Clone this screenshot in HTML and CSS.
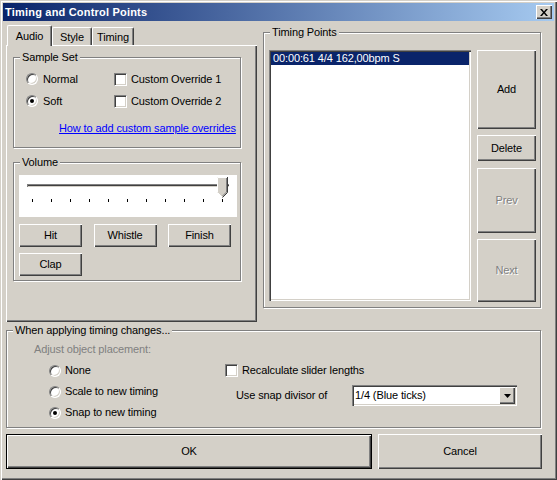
FILE: index.html
```html
<!DOCTYPE html>
<html>
<head>
<meta charset="utf-8">
<title>Timing and Control Points</title>
<link rel="stylesheet" href="styles.css">
</head>
<body>
<div class="window">
  <div class="titlebar">
    <span class="title">Timing and Control Points</span>
    <span class="close"><svg width="8" height="7" viewBox="0 0 8 7"><path d="M0 0H2L4 2.5L6 0H8L5 3.5L8 7H6L4 4.5L2 7H0L3 3.5Z" fill="#000"/></svg></span>
  </div>
  <div class="content">
    <div class="toprow">
      <div class="tabctl">
        <div class="tabstrip">
          <div class="tab active t-audio">Audio</div>
          <div class="tab t-style">Style</div>
          <div class="tab t-timing">Timing</div>
        </div>
        <div class="tabpanel">
          <div class="group sampleset">
            <span class="legend">Sample Set</span>
            <div class="optgrid">
              <div class="opt r"><span class="radio"></span>Normal</div>
              <div class="opt c"><span class="check"></span>Custom Override 1</div>
              <div class="opt r"><span class="radio on"></span>Soft</div>
              <div class="opt c"><span class="check"></span>Custom Override 2</div>
            </div>
            <a class="link">How to add custom sample overrides</a>
          </div>
          <div class="group volume">
            <span class="legend">Volume</span>
            <div class="slider">
              <svg width="218" height="42" viewBox="0 0 218 42">
                <rect x="8" y="9" width="202" height="1" fill="#808080"/>
                <rect x="8" y="10" width="202" height="1" fill="#404040"/>
                <rect x="9" y="11" width="201" height="1" fill="#d4d0c8"/>
                <rect x="8" y="12" width="202" height="1" fill="#ffffff"/>
                <rect x="8" y="9" width="1" height="3" fill="#808080"/>
                <path d="M13.5 24V27M32.5 24V27M51.5 24V27M70.5 24V27M89.5 24V27M108.5 24V27M127.5 24V27M146.5 24V27M165.5 24V27M184.5 24V27M203.5 24V27" stroke="#000" stroke-width="1"/>
                <polygon points="198,2 209,2 209,17 203.5,22.5 198,17" fill="#d4d0c8"/>
                <path d="M198.5 17V2.5H208" stroke="#fff" fill="none"/>
                <path d="M198.5 17.5L203 22" stroke="#fff" fill="none"/>
                <path d="M208.5 2V17.5L203.5 22.5" stroke="#404040" fill="none"/>
                <path d="M207.5 3V17L203.5 21" stroke="#808080" fill="none"/>
              </svg>
            </div>
            <div class="sndbtns">
              <div class="btn">Hit</div>
              <div class="btn">Whistle</div>
              <div class="btn">Finish</div>
              <div class="btn">Clap</div>
            </div>
          </div>
        </div>
      </div>
      <div class="group points">
        <span class="legend">Timing Points</span>
        <div class="listbox">
          <div class="item sel">00:00:61 4/4 162,00bpm S</div>
        </div>
        <div class="sidebtns">
          <div class="btn add">Add</div>
          <div class="btn del">Delete</div>
          <div class="btn prev disabled">Prev</div>
          <div class="btn next disabled">Next</div>
        </div>
      </div>
    </div>
    <div class="group apply">
      <span class="legend">When applying timing changes...</span>
      <div class="applyleft">
        <div class="row21 gray">Adjust object placement:</div>
        <div class="opt ar"><span class="radio"></span>None</div>
        <div class="opt ar"><span class="radio"></span>Scale to new timing</div>
        <div class="opt ar"><span class="radio on"></span>Snap to new timing</div>
      </div>
      <div class="applyright">
        <div class="opt recalc"><span class="check"></span>Recalculate slider lengths</div>
        <div class="snaprow">
          <span class="lbl">Use snap divisor of</span>
          <div class="combo">
            <span class="val">1/4 (Blue ticks)</span>
            <span class="drop"><svg width="7" height="4" viewBox="0 0 7 4"><polygon points="0,0 7,0 3.5,4" fill="#000"/></svg></span>
          </div>
        </div>
      </div>
    </div>
    <div class="dlgbtns">
      <div class="btn ok default">OK</div>
      <div class="btn cancel">Cancel</div>
    </div>
  </div>
</div>
</body>
</html>
```
FILE: styles.css
```css
* { box-sizing: border-box; }
html, body { margin: 0; padding: 0; }
body {
  background: #d4d0c8;
  font-family: "Liberation Sans", Arial, sans-serif;
  font-size: 11px;
  line-height: 13px;
  letter-spacing: -0.12px;
  color: #000;
}
.window {
  width: 557px;
  height: 480px;
  padding: 3px;
  background: #d4d0c8;
  box-shadow: inset 1px 1px #d4d0c8, inset 2px 2px #ffffff, inset -1px -1px #404040, inset -2px -2px #808080;
}
.titlebar {
  height: 18px;
  display: flex;
  align-items: center;
  justify-content: space-between;
  padding: 0 2px;
  background: linear-gradient(to right, #0a246a, #a6caf0);
  color: #fff;
  font-weight: bold;
}
.title { letter-spacing: 0.2px; }
.close {
  width: 16px;
  height: 14px;
  display: flex;
  align-items: center;
  justify-content: center;
  padding-top: 1px;
  background: #d4d0c8;
  box-shadow: inset 1px 1px #fff, inset -1px -1px #404040, inset -2px -2px #808080;
}
.close svg { display: block; }
.content { padding: 4px 0 0 3px; }
.toprow { display: flex; gap: 6px; height: 297px; align-items: flex-start; }
.tabctl { width: 251px; }
.tabstrip {
  display: flex;
  align-items: flex-end;
  height: 20px;
  padding-left: 1px;
}
.tab {
  height: 18px;
  border: 1px solid #fff;
  border-right-color: #404040;
  border-bottom: none;
  border-radius: 2px 2px 0 0;
  box-shadow: inset -1px 0 #808080;
  padding-top: 3px;
  text-align: center;
  background: #d4d0c8;
}
.tab.active {
  height: 21px;
  margin-bottom: -1px;
  position: relative;
  z-index: 1;
  padding-top: 4px;
}
.t-audio { width: 45px; }
.t-style { width: 40px; }
.t-timing { width: 42px; }
.tabpanel {
  height: 277px;
  padding: 12px 0 0 7px;
  box-shadow: inset 1px 1px #fff, inset -1px -1px #404040, inset -2px -2px #808080;
}
.group {
  position: relative;
  border: 1px solid #808080;
  box-shadow: inset 1px 1px #fff, 1px 1px #fff;
}
.legend {
  position: absolute;
  top: -7px;
  left: 6px;
  padding: 0 2px;
  background: #d4d0c8;
  line-height: 13px;
  white-space: nowrap;
}
.sampleset { width: 228px; height: 91px; padding: 10px 0 0 12px; }
.optgrid {
  display: grid;
  grid-template-columns: 88px auto;
  grid-auto-rows: 22px;
}
.opt { display: flex; align-items: center; white-space: nowrap; }
.opt.r { gap: 5px; }
.opt.c { gap: 4px; }
.radio {
  position: relative;
  flex: none;
  width: 12px;
  height: 12px;
  border-radius: 50%;
  background: #fff;
  border: 1px solid;
  border-color: #808080 #fff #fff #808080;
  box-shadow: inset 1px 1px #404040, inset -1px -1px #d4d0c8;
}
.radio.on::after {
  content: "";
  position: absolute;
  left: 3px;
  top: 3px;
  width: 4px;
  height: 4px;
  border-radius: 50%;
  background: #000;
}
.check {
  flex: none;
  width: 13px;
  height: 13px;
  background: #fff;
  border: 1px solid;
  border-color: #808080 #fff #fff #808080;
  box-shadow: inset 1px 1px #404040, inset -1px -1px #d4d0c8;
}
.link {
  display: block;
  margin: 10px 0 0 33px;
  color: #0000ff;
  text-decoration: underline;
}
.volume { width: 228px; height: 119px; margin-top: 14px; padding: 12px 0 0 5px; }
.slider { width: 218px; height: 42px; background: #fff; }
.slider svg { display: block; }
.sndbtns {
  display: grid;
  grid-template-columns: repeat(3, 63px);
  grid-auto-rows: 23px;
  column-gap: 11.5px;
  row-gap: 6px;
  margin-top: 7px;
}
.btn {
  display: flex;
  align-items: center;
  justify-content: center;
  background: #d4d0c8;
  box-shadow: inset 1px 1px #fff, inset -1px -1px #404040, inset -2px -2px #808080;
}
.points {
  width: 278px;
  height: 276px;
  margin-top: 7px;
  padding: 17px 0 0 5px;
  display: flex;
  gap: 6px;
  align-items: flex-start;
}
.listbox {
  width: 202px;
  height: 251px;
  padding: 2px;
  background: #fff;
  box-shadow: inset 1px 1px #808080, inset 2px 2px #404040, inset -1px -1px #fff, inset -2px -2px #d4d0c8;
}
.item { height: 13px; padding-left: 2px; white-space: nowrap; }
.item.sel { background: #0a246a; color: #fff; }
.sidebtns { width: 59px; display: flex; flex-direction: column; }
.add { height: 79px; }
.del { height: 26px; margin-top: 6px; }
.prev { height: 65px; margin-top: 7px; }
.next { height: 63px; margin-top: 6px; }
.disabled { color: #808080; text-shadow: 1px 1px #fff; }
.apply {
  width: 535px;
  height: 98px;
  margin-top: 8px;
  padding: 8px 0 0 27px;
  display: flex;
}
.applyleft { width: 191px; }
.row21 { height: 21px; display: flex; align-items: center; }
.gray { color: #808080; }
.opt.ar { height: 21px; padding-left: 15px; gap: 4px; }
.applyright { padding-top: 21px; }
.opt.recalc { height: 21px; gap: 4px; }
.snaprow {
  display: flex;
  align-items: center;
  height: 21px;
  margin-top: 4px;
  padding-left: 11px;
}
.snaprow .lbl { width: 116px; white-space: nowrap; }
.combo {
  width: 165px;
  height: 21px;
  padding: 2px;
  display: flex;
  align-items: center;
  justify-content: space-between;
  background: #fff;
  box-shadow: inset 1px 1px #808080, inset 2px 2px #404040, inset -1px -1px #fff, inset -2px -2px #d4d0c8;
}
.combo .val { padding-left: 1px; }
.drop {
  width: 16px;
  height: 17px;
  display: flex;
  align-items: center;
  justify-content: center;
  background: #d4d0c8;
  box-shadow: inset 1px 1px #fff, inset -1px -1px #404040, inset -2px -2px #808080;
}
.drop svg { display: block; }
.dlgbtns { display: flex; gap: 6px; margin-top: 6px; }
.dlgbtns .btn { height: 35px; }
.ok { width: 366px; }
.cancel { width: 164px; }
.btn.default { border: 1px solid #000; }
```
